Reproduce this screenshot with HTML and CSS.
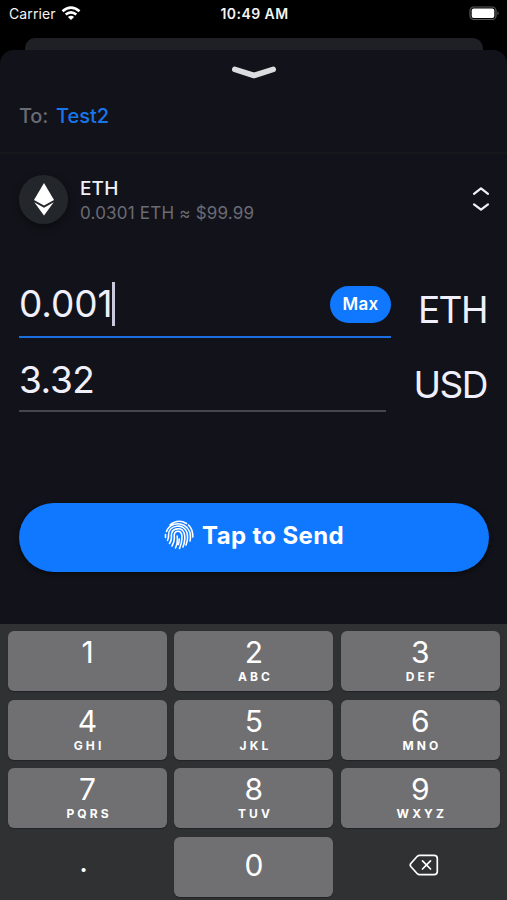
FILE: index.html
```html
<!DOCTYPE html>
<html lang="en">
<head>
<meta charset="utf-8">
<title>Send</title>
<link rel="stylesheet" href="styles.css">
</head>
<body>
<div class="phone">
  <header class="status">
    <div class="carrier"><span>Carrier</span>
      <svg width="20" height="15" viewBox="0 0 20 15" fill="none" stroke="#fff" stroke-width="2.700"><path d="M1.500 5.300Q10-2.100 18.500 5.300M4.700 8.600Q10 4 15.300 8.600"/><path d="M10 14L6.900 10.900Q10 8.500 13.100 10.900Z" fill="#fff" stroke="none"/></svg>
    </div>
    <span class="time">10:49 AM</span>
    <svg class="battery" width="31" height="15" viewBox="0 0 31 15"><rect x="1" y="1" width="26" height="12.500" rx="3.800" fill="none" stroke="#5b5b5d" stroke-width="1.200"/><rect x="2.700" y="2.600" width="22.600" height="9.300" rx="2" fill="#fff"/><path d="M28.500 5.200Q31 7.200 28.500 9.300Z" fill="#5b5b5d"/></svg>
  </header>
  <div class="backsheet"></div>
  <main class="sheet">
    <svg class="grabber" width="46" height="15" viewBox="0 0 46 15" fill="none" stroke="#dcdce0" stroke-width="5.600" stroke-linecap="round" stroke-linejoin="round"><path d="M3.800 4.300L23 10.500L42.200 4.300"/></svg>
    <div class="to"><span class="to-label">To:</span><span class="to-name">Test2</span></div>
    <section class="asset">
      <div class="coin"><svg width="22" height="34" viewBox="0 0 22 34" fill="#fff"><path d="M11 1L21 18L11 23.500L1 18Z"/><path d="M1.300 20.300L11 25.800L20.700 20.300L11 33.500Z"/></svg></div>
      <div class="asset-text"><div class="asset-name">ETH</div><div class="asset-sub">0.0301 ETH ≈ $99.99</div></div>
      <svg class="sort" width="18" height="26" viewBox="0 0 18 26" fill="none" stroke="#f0f0fa" stroke-width="2.200" stroke-linecap="round" stroke-linejoin="round"><path d="M2 7.800L9 2.400L16 7.800M2 18.300L9 23.700L16 18.300"/></svg>
    </section>
    <section class="amounts">
      <div class="field active"><span class="value">0.001</span><i class="caret"></i><button class="max">Max</button></div>
      <div class="unit">ETH</div>
      <div class="field second"><span class="value">3.32</span></div>
      <div class="unit">USD</div>
    </section>
    <button class="send">
      <svg width="30" height="30" viewBox="0 0 30 30" fill="none" stroke="#fff" stroke-width="1.600" stroke-linecap="round"><path d="M6 4.800Q14-1.500 22.500 3.500M2.500 11.500C5.500 3.500 14.500 2.200 20 5.300Q24 7.500 25.800 12Q27 16 26 21M24.500 5Q29 9.500 28.800 17M1.500 14.500V17.500M3.500 20.500Q4.800 18 4.500 15C4.500 4.500 20 3 23 12.500Q24.500 19 22 25M5.500 23.500Q8 20 7.300 15.500C7.500 7.500 18 6.500 20.300 13.500Q21.800 20 19 27M8 26Q11 21 10.200 16C10 10.500 16.500 9.500 17.700 14.500Q18.800 21 15.500 28.500M11.500 28Q14 23 13.200 16M15.300 19Q15.200 22 14.300 24.500"/></svg>
      <span>Tap to Send</span>
    </button>
  </main>
  <footer class="keys">
    <div class="key"><b>1</b></div>
    <div class="key"><b>2</b><small>ABC</small></div>
    <div class="key"><b>3</b><small>DEF</small></div>
    <div class="key"><b>4</b><small>GHI</small></div>
    <div class="key"><b>5</b><small>JKL</small></div>
    <div class="key"><b>6</b><small>MNO</small></div>
    <div class="key"><b>7</b><small>PQRS</small></div>
    <div class="key"><b>8</b><small>TUV</small></div>
    <div class="key"><b>9</b><small>WXYZ</small></div>
    <div class="key plain dot"><b>.</b></div>
    <div class="key zero"><b>0</b></div>
    <div class="key plain back"><svg width="30" height="22" viewBox="0 0 30 22" fill="none" stroke="#fff" stroke-width="1.700" stroke-linecap="round" stroke-linejoin="round"><path d="M10.500 1.300H25Q28.300 1.300 28.300 4.500V17.500Q28.300 20.700 25 20.700H10.500Q9.300 20.700 8.300 19.700L1.800 12.500Q.7 11 1.800 9.500L8.300 2.300Q9.300 1.300 10.500 1.300ZM13.500 6.800L21.500 15M21.500 6.800L13.500 15"/></svg></div>
  </footer>
</div>
</body>
</html>
```
FILE: styles.css
```css
* { box-sizing: border-box; }
body { margin: 0; background: #000; font-family: Inter, sans-serif; color: #f0f0fc; }
button { font-family: inherit; border: 0; padding: 0; color: #fff; background: #0f78ff; }
svg { display: block; flex: none; }
.phone { width: 507px; height: 900px; overflow: hidden; display: flex; flex-direction: column; }
.status { height: 38px; padding: 0 7px 0 9px; display: grid; grid-template-columns: 1fr auto 1fr; align-items: start; font-size: 14px; line-height: 28px; color: #f4f4f4; }
.carrier { display: flex; gap: 5px; letter-spacing: .1px; }
.carrier svg { margin-top: 6px; }
.time { font-weight: 600; letter-spacing: .45px; }
.battery { justify-self: end; margin-top: 6px; }
.backsheet { height: 12px; margin: 0 24px 0 25px; border-radius: 10px 10px 0 0; background: #1e2026; }
.sheet { height: 574px; background: #12131a; border-radius: 14px 14px 0 0; display: flex; flex-direction: column; }
.grabber { margin: 15px 0 0 231px; }
.to { height: 74px; padding: 24px 19px 0; border-bottom: 2px solid #15171b; display: flex; gap: 8px; font-size: 20px; line-height: 25px; font-weight: 500; }
.to-label { color: #6a6b74; letter-spacing: -.2px; }
.to-name { color: #1976ea; }
.asset { height: 90px; padding: 0 17px 0 19px; display: flex; align-items: center; }
.coin { width: 49px; height: 49px; border-radius: 50%; background: #23272b; display: flex; align-items: center; justify-content: center; box-shadow: 0 3px 6px #0b0c10; }
.asset-text { margin: 3px 0 0 12px; flex: 1; }
.asset-name { font-size: 19px; line-height: 25px; font-weight: 500; letter-spacing: .15px; }
.asset-sub { font-size: 17px; line-height: 25px; color: #6a6b74; letter-spacing: .2px; }
.amounts { height: 154px; margin: 27px 19px 0; display: grid; grid-template-columns: 372px 1fr; grid-template-rows: 68px 74px; }
.field { border-bottom: 2px solid #1b6fe0; margin-bottom: 1px; padding-top: 1px; display: flex; align-items: center; }
.second { width: 367px; padding-top: 10px; border-color: #46464b; }
.value { font-size: 37px; line-height: 44px; letter-spacing: -.1px; }
.second .value { letter-spacing: -.4px; }
.caret { width: 3px; height: 44px; background: #c9c9dc; }
.max { width: 61px; height: 37px; margin-left: auto; border-radius: 19px; font-size: 17px; font-weight: 600; letter-spacing: .3px; }
.unit { padding-top: 10px; font-size: 37px; line-height: 44px; text-align: right; align-self: center; letter-spacing: -1.500px; margin-right: 1px; }
.second + .unit { padding-top: 18px; }
.send { width: 470px; height: 69px; margin: 78px 0 0 19px; padding-bottom: 4px; border-radius: 35px; display: flex; align-items: center; justify-content: center; gap: 8px; font-size: 24px; font-weight: 700; letter-spacing: .35px; box-shadow: 0 2px 5px #08090c; }
.send svg { margin-top: -2px; }
.keys { height: 276px; padding: 7px 7px 0 8px; background: #303133; display: grid; grid-template-columns: repeat(3, 159px); grid-auto-rows: 60px; gap: 8.500px 7.400px; color: #fff; }
.key { border-radius: 6px; background: #707072; box-shadow: 0 1px 1px #222325; display: flex; flex-direction: column; align-items: center; padding-top: 4px; }
.key b { font-size: 30px; line-height: 35px; font-weight: 400; }
.key small { font-size: 12px; line-height: 14px; font-weight: 700; letter-spacing: 3.100px; margin-right: -3.100px; }
.zero { padding-top: 11px; }
.plain { background: none; box-shadow: none; }
.dot { padding: 7px 8px 0 0; }
.back { padding: 17px 0 0 7px; }
```
